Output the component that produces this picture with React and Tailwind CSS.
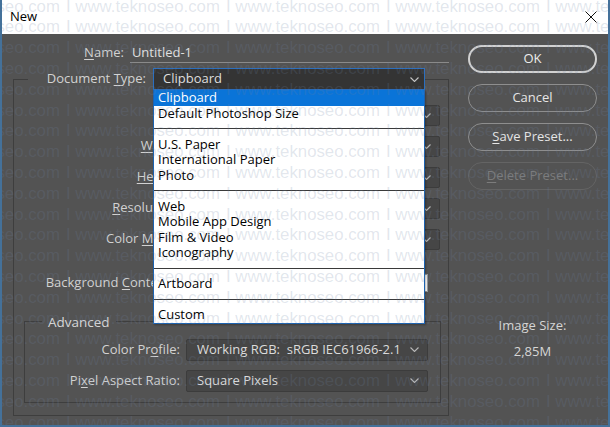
import React from "react";

const FONT = { fontFamily: '"Open Sans", "Noto Sans", sans-serif' };

function Chevron({ color = "#b8b8b8" }) {
  return (
    <svg width="9" height="5" viewBox="0 0 9 5" className="shrink-0">
      <polyline points="0.5,0.5 4.5,4.5 8.5,0.5" fill="none" stroke={color} strokeWidth="1.1" />
    </svg>
  );
}

function DarkSelect({ className = "", text = "", textClass = "text-[#dcdcdc]" }) {
  return (
    <div className={`flex items-center justify-between bg-[#464646] border border-[#3c3c3c] rounded-[2px] pl-[10px] pr-[8px] ${className}`}>
      <span className={`text-[13px] whitespace-pre ${textClass}`}>{text}</span>
      <Chevron />
    </div>
  );
}

function Label({ children, className = "" }) {
  return <div className={`text-right text-[13px] text-[#d2d2d2] whitespace-nowrap ${className}`}>{children}</div>;
}

const MENU = [
  { t: "Clipboard", sel: true },
  { t: "Default Photoshop Size" },
  { sep: true },
  { t: "U.S. Paper" },
  { t: "International Paper" },
  { t: "Photo" },
  { sep: true },
  { t: "Web" },
  { t: "Mobile App Design" },
  { t: "Film & Video" },
  { t: "Iconography" },
  { sep: true },
  { t: "Artboard" },
  { sep: true },
  { t: "Custom" },
];

function Watermark() {
  const rows = Array.from({ length: 22 });
  const cells = Array.from({ length: 5 });
  return (
    <div className="pointer-events-none absolute inset-0 overflow-hidden z-30">
      <div className="flex flex-col -mt-[3.4px]">
        {rows.map((_, i) => (
          <div
            key={i}
            className="h-[20.8px] leading-[20.8px] whitespace-nowrap -ml-[96px] text-[16.8px] text-[rgba(110,130,160,0.2)]"
            style={{ fontFamily: '"Liberation Sans", Arial, sans-serif' }}
          >
            {cells.map((_, j) => (
              <span key={j} className="inline-block w-[160px]">I www.teknoseo.com</span>
            ))}
          </div>
        ))}
      </div>
    </div>
  );
}

function Button({ children, variant = "normal" }) {
  const cls = {
    default: "border-2 border-[#d2d2d2] text-[#ececec]",
    normal: "border-[1.5px] border-[#8e8e8e] text-[#e6e6e6]",
    disabled: "border-[1.5px] border-[#646464] text-[#7c7c7c]",
  }[variant];
  return (
    <div className={`h-[28px] w-[129px] rounded-full flex items-center justify-center text-[13px] ${cls}`}>
      {children}
    </div>
  );
}

export default function App() {
  return (
    <div className="relative w-[610px] h-[427px] overflow-hidden border-x-2 border-b-2 border-[#44719a] bg-[#535353] flex flex-col" style={FONT}>
      {/* Title bar */}
      <div className="h-[34px] shrink-0 bg-white flex items-center justify-between pl-[8px] pr-[11px]">
        <span className="text-[13px] text-black">New</span>
        <svg width="12" height="12" viewBox="0 0 12 12">
          <line x1="0.5" y1="0.5" x2="11.5" y2="11.5" stroke="#111" strokeWidth="1" />
          <line x1="11.5" y1="0.5" x2="0.5" y2="11.5" stroke="#111" strokeWidth="1" />
        </svg>
      </div>

      {/* Body */}
      <div className="flex flex-1">
        {/* Left */}
        <div className="w-[447px] shrink-0 pl-[11px] flex flex-col">
          {/* Name row */}
          <div className="mt-[9px] h-[20px] flex items-center -ml-[11px]">
            <Label className="w-[123px]"><u className="underline-offset-2">N</u>ame:</Label>
            <div className="ml-[6px] w-[322px] h-[20px] border-b border-[#8a8a8a] flex items-center pl-[2px]">
              <span className="text-[13px] text-[#e0e0e0]">Untitled-1</span>
            </div>
          </div>

          {/* Main group */}
          <fieldset className="mt-[5px] w-[436px] border border-[#3e3e3e] p-0 pb-[12px] m-0 min-w-0">
            <legend className="ml-[14px] p-0">
              <div className="flex items-center h-[22px]">
                <Label className="w-[118px]">Document <u className="underline-offset-2">T</u>ype:</Label>
                <div className="relative ml-[7px] w-[272px]">
                  <div className="h-[22px] flex items-center justify-between bg-[#343434] border border-[#2a6fc0] pl-[9px] pr-[5px]">
                    <span className="text-[13px] text-[#dedede]">Clipboard</span>
                    <Chevron color="#c4c4c4" />
                  </div>
                  {/* dropdown menu */}
                  <div className="absolute left-0 top-full z-20 w-[272px] bg-white border-x border-b border-[#1c62b0] shadow-[1px_1px_2px_rgba(0,0,0,0.3)] flex flex-col">
                    {MENU.map((m, i) =>
                      m.sep ? (
                        <div key={i} className="h-[15.5px] flex items-center">
                          <div className="w-full h-[1px] bg-[#3a3a3a]" />
                        </div>
                      ) : (
                        <div
                          key={i}
                          className={`h-[15.5px] flex items-center pl-[4px] text-[13px] leading-none whitespace-nowrap ${m.sel ? "bg-[#0a74d8] text-white" : "text-black"}`}
                        >
                          {m.t}
                        </div>
                      )
                    )}
                  </div>
                </div>
              </div>
            </legend>

            {/* rows hidden under menu */}
            <div className="flex flex-col gap-[10px] mt-[14.5px]">
              <div className="h-[21px] flex items-center">
                <Label className="w-[166px] text-[#8a8a8a]">Size:</Label>
                <DarkSelect className="ml-[6px] w-[254px] h-[21px]" text="" />
              </div>
              <div className="h-[21px] flex items-center">
                <Label className="w-[166px]"><u className="underline-offset-2">W</u>idth:</Label>
                <DarkSelect className="ml-[6px] w-[114px] h-[21px]" text="" />
                <DarkSelect className="ml-[6px] w-[134px] h-[21px]" text="Pixels" />
              </div>
              <div className="h-[21px] flex items-center">
                <Label className="w-[166px]"><u className="underline-offset-2">He</u>ight:</Label>
                <DarkSelect className="ml-[6px] w-[114px] h-[21px]" text="" />
                <DarkSelect className="ml-[6px] w-[134px] h-[21px]" text="Pixels" />
              </div>
              <div className="h-[21px] flex items-center">
                <Label className="w-[166px]"><u className="underline-offset-2">R</u>esolution:</Label>
                <DarkSelect className="ml-[6px] w-[114px] h-[21px]" text="72" />
                <DarkSelect className="ml-[6px] w-[134px] h-[21px]" text="Pixels/Inch" />
              </div>
              <div className="h-[21px] flex items-center">
                <Label className="w-[166px]">Color <u className="underline-offset-2">M</u>ode:</Label>
                <DarkSelect className="ml-[6px] w-[114px] h-[21px]" text="RGB Color" />
                <DarkSelect className="ml-[6px] w-[134px] h-[21px]" text="8 bit" />
              </div>
            </div>
            <div className="h-[21px] flex items-center mt-[23px]">
              <Label className="w-[166px]">Background <u className="underline-offset-2">C</u>ontents:</Label>
              <DarkSelect className="ml-[6px] w-[218px] h-[21px]" text="White" />
              <div className="ml-[6px] w-[18px] h-[18px] bg-white border border-[#9a9a9a]" />
            </div>

            {/* Advanced */}
            <fieldset className="mt-[20px] ml-[10px] w-[417px] border border-[#3e3e3e] p-0 pb-[10px] m-0 min-w-0">
              <legend className="ml-[17px] px-[6px]">
                <span className="block h-[16px] leading-[16px] text-[13.5px] text-[#d8d8d8]">Advanced</span>
              </legend>
              <div className="flex flex-col gap-[9px] mt-[9px]">
                <div className="h-[22px] flex items-center">
                  <Label className="w-[155px]">Color Pr<u className="underline-offset-2">o</u>file:</Label>
                  <DarkSelect className="ml-[6px] w-[242px] h-[22px]" text="Working RGB:  sRGB IEC61966-2.1" />
                </div>
                <div className="h-[22px] flex items-center">
                  <Label className="w-[155px]">Pi<u className="underline-offset-2">x</u>el Aspect Ratio:</Label>
                  <DarkSelect className="ml-[6px] w-[242px] h-[22px]" text="Square Pixels" />
                </div>
              </div>
            </fieldset>
          </fieldset>
        </div>

        {/* Right */}
        <div className="flex-1 flex flex-col items-start pl-[19px]">
          <div className="mt-[11px] flex flex-col gap-[11px]">
            <Button variant="default">OK</Button>
            <Button>Cancel</Button>
            <Button><span><u className="underline-offset-2">S</u>ave Preset...</span></Button>
            <Button variant="disabled"><span><u className="underline-offset-2">D</u>elete Preset...</span></Button>
          </div>
          <div className="w-[129px] mt-[126px] flex flex-col items-center text-[13px] text-[#d6d6d6]">
            <div className="h-[18px] leading-[18px]">Image Size:</div>
            <div className="h-[18px] leading-[18px] mt-[8px]">2,85M</div>
          </div>
        </div>
      </div>

      <Watermark />
    </div>
  );
}
